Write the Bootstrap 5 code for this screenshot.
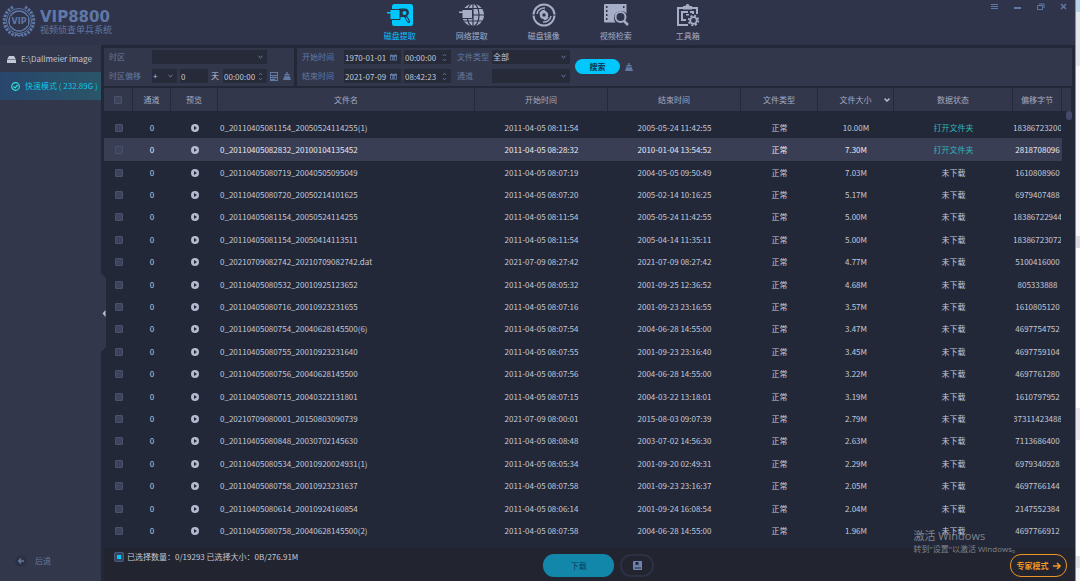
<!DOCTYPE html>
<html lang="zh-CN">
<head>
<meta charset="utf-8">
<meta name="viewport" content="width=device-width, initial-scale=1">
<title>VIP8800 视频侦查单兵系统</title>
<link rel="stylesheet" href="https://cdn.jsdelivr.net/npm/bootstrap@5.3.0/dist/css/bootstrap.min.css">
<style>
  :root { --panel:#32374b; --deep:#232838; --field:#262a39; --muted:#6279a3; --text:#c3c8d8; --accent:#00c8ff; }
  html, body { height:100%; }
  body { font:8px/12px "Noto Sans CJK SC",sans-serif; color:var(--text); background:var(--deep); overflow:hidden; }
  svg { display:block; fill:currentColor; flex:none; }
  button, a { color:inherit; text-decoration:none; }
  .plain { background:none; border:0; padding:0; }
  .muted { color:var(--muted); }

  .topbar { display:grid; grid-template-columns:34fr auto 33fr; height:45px; background:#2f344a; padding-left:2px; }
  .brand { color:#5f78a8; padding-top:4px; gap:4px; }
  .brand-name { font:bold 15px/14px "DejaVu Sans",sans-serif; margin:0; }
  .brand-sub { font-size:9px; line-height:11px; }
  .tool { width:72px; padding-top:3px; color:#a5aec6; text-align:center; }
  .tool svg { margin:0 auto 1px; }
  .tool span { font-size:8px; line-height:13px; display:block; }
  .tool.current { color:var(--accent); }
  .winctl { color:#5f78a8; gap:14px; padding:2px 7px 0 0; }

  .side { width:101px; background:var(--panel); padding-top:1px; }
  .side-link { height:26px; padding-left:7px; gap:5px; }
  .side-link.current { height:28px; padding-left:11px; background:linear-gradient(90deg,#28466c,#2a5568); color:#0fc3e8; }
  .back { padding:0 0 14px 15px; gap:8px; color:var(--muted); }
  .back i { width:12px; height:12px; border-radius:50%; background:#2c3145; display:grid; place-items:center; }
  .fold { position:absolute; left:0; top:228px; width:5px; height:79px; z-index:2; color:#32374b; }

  .main { background:var(--deep); padding:3px 3px 0 3px; }
  .pane { background:var(--panel); padding:2px 0 3px 5px; height:38px; }
  .grid2 { display:grid; grid-auto-rows:14px; gap:5px 3px; align-items:center; }
  .zone { width:190px; grid-template-columns:40px 115px auto; }
  .when { grid-template-columns:39px 57px 47px; }
  .kind { grid-template-columns:32px 78px; }
  .fld { background-color:var(--field); color:var(--text); border:0; border-radius:0; height:14px; padding:0 1px; font:inherit; min-width:0; width:100%; outline:0; appearance:none; }
  select.fld { background-image:url("data:image/svg+xml,%3Csvg xmlns='http://www.w3.org/2000/svg' viewBox='0 0 6 4'%3E%3Cpath d='M.6.8 3 3 5.400.8' fill='none' stroke='%236f88b5' stroke-width='1.2'/%3E%3C/svg%3E"); background-repeat:no-repeat; background-position:right 4px center; background-size:5px 4px; }
  .box { background:var(--field); height:14px; padding-right:4px; color:var(--muted); }
  .go { background:var(--accent); color:#0c3350; border:0; border-radius:8px; width:45px; height:15px; font-weight:bold; padding:0; line-height:15px; }

  .list-zone { margin-top:2px; margin-bottom:6px; min-height:0; }
  .files { width:100%; height:100%; table-layout:fixed; border-collapse:separate; border-spacing:0; }
  .files th { height:23px; background:var(--panel); border-right:1px solid #252a3a; color:#a3abc2; font-weight:normal; text-align:center; padding:0; position:relative; }
  .files .gap td { height:5px; }
  .files td { padding:1px 0 0; text-align:center; white-space:nowrap; line-height:12px; }
  .files td:nth-child(4) { text-align:left; padding-left:2px; }
  .files tr.on td:not(:last-child) { background:#3a3e55; color:#e6e8f0; }
  .files td a, .files tr.on td a { color:#2fb5b5; }
  .files .bytes { display:flex; justify-content:center; overflow:hidden; margin:0 1px; }
  .files svg { margin:auto; color:#b3bacd; }
  .sort { position:absolute; right:3px; top:10px; }
  .tick { appearance:none; width:8px; height:8px; display:block; margin:auto; background:#3c435a; border:1px solid #4a526b; border-radius:1px; }
  .tick:indeterminate { background:var(--accent); border:2px solid #34455f; box-shadow:0 0 0 1px #4a5a7c; }
  .thumb { position:absolute; right:0; top:23px; width:6px; height:9px; border-radius:3px; background:#454a6b; }

  .foot { display:grid; grid-template-columns:28fr auto 27fr; height:33px; background:#22252f; margin-right:-3px; padding:0 8px 0 11px; }
  .foot label { gap:4px; height:18px; }
  .foot .tick { margin:0; }
  .dl { width:71px; height:23px; border:0; border-radius:11px; background:#1287aa; color:#0c3e54; }
  .save { width:34px; height:23px; border:2px solid #2c3042; border-radius:11px; background:none; color:#6f83b3; display:grid; place-items:center; padding:0; }
  .expert { width:57px; height:23px; border:1px solid #ee9426; border-radius:11px; background:none; color:#ee9426; font-weight:bold; gap:4px; padding:0; }
  .notice { position:absolute; right:55px; bottom:26px; color:#92959d; font-family:"Open Sans","Noto Sans CJK SC",sans-serif; pointer-events:none; opacity:.85; }
  .notice strong { display:block; font-size:11px; line-height:15px; font-weight:normal; }
  .edge { width:5px; border-left:1px solid #8b8e98; background:linear-gradient(#b9d4ea 0 12px,#e4e6ea 12px 66px,#f8f8f8 66px 236px,#dedee0 236px 248px,#fff 248px 408px,#e8e8ea 408px 440px,#fff 440px 556px,#e2e2e4 556px 568px,#f4f4f4 568px); }
</style>
</head>
<body class="d-flex">
<svg class="d-none">
  <symbol id="play" viewBox="0 0 8 8"><path fill-rule="evenodd" d="M4 0a4 4 0 1 1 0 8 4 4 0 0 1 0-8zM3 2v4l3-2z"/></symbol>
  <symbol id="cal" viewBox="0 0 8 8"><path fill-rule="evenodd" d="M0 1h1.500V0h1v1h3V0h1v1H8v6.500H0zM1 3v3.500h1.300V3zm2.100 0v3.500h.5V3zm1.300 0v3.500h.5V3zM5.700 3v3.500H7V3z"/></symbol>
  <symbol id="spin" viewBox="0 0 6 10"><path d="M1 3.200 3 1l2 2.200M1 6.800 3 9l2-2.200" fill="none" stroke="currentColor"/></symbol>
  <symbol id="brush" viewBox="0 0 8 8"><path d="M3.300 0h1.400v2H6.500v1.500h-5V2h1.800zM1.200 4.200h5.600L8 8H0z"/></symbol>
</svg>

<div class="flex-grow-1 d-flex flex-column position-relative" style="min-width:0">
  <header class="topbar">
    <div class="brand d-flex">
      <svg width="34" height="34" viewBox="0 0 34 34" fill="none">
        <g fill="none" stroke="currentColor"><circle cx="17" cy="17" r="12.500" stroke-width="1"/><circle cx="17" cy="17" r="10" stroke-width="1.500"/>
        <path stroke-width="3" stroke-dasharray="2.400 1.200" d="M11 3.200A15 15 0 0 0 14 31.500M23 3.200A15 15 0 0 1 20 31.500"/><path d="M13 30l4 2 4-2" stroke-width="1.500"/></g>
        <rect x="8" y="12.500" width="18" height="9" fill="#2f344a"/>
        <text x="17" y="20" text-anchor="middle" font-family="DejaVu Sans" font-weight="bold" font-size="8" fill="currentColor">VIP</text>
      </svg>
      <div style="padding-top:6px"><h1 class="brand-name">VIP8800</h1><div class="brand-sub">视频侦查单兵系统</div></div>
    </div>
    <nav class="d-flex">
      <a class="tool current" href="#"><svg width="26" height="25" viewBox="0 0 26 25"><rect x="5" y="1" width="21" height="22" rx="2.500"/><path d="M12 5.500h6a4 4 0 0 1 2 7.400l3 4.600a1.600 1.600 0 0 1-2.800 1.600l-3.200-5h-5" fill="#20374f"/><path d="M3 6.500h10v10H3z" stroke="#2f344a"/><path d="M0 9h5v1.500H0z"/><circle cx="17.500" cy="10" r="2"/><path d="m19 14.500 2.500 3.800" stroke="currentColor" stroke-width="1.200"/></svg><span>磁盘提取</span></a>
      <a class="tool" href="#"><svg width="26" height="25" viewBox="0 0 26 25"><circle cx="14" cy="12" r="11"/><g fill="none" stroke="#2f344a" stroke-width="1.200"><path d="M14 1v22M4 5.500h20M3 12h23M4 18h20"/><ellipse cx="14" cy="12" rx="6" ry="11.500"/></g><path d="M3 6.500h10.500v9H3z" stroke="#2f344a"/><path d="M0 8.500h5V10H0z"/></svg><span>网络提取</span></a>
      <a class="tool" href="#"><svg width="26" height="25" viewBox="0 0 26 25"><g fill="none" stroke="currentColor"><circle cx="13" cy="12" r="10.500" stroke-width="2"/><circle cx="13" cy="12" r="3" stroke-width="2.500"/><path stroke-width="1.500" d="M6 11a7 7 0 0 1 8-6M9 11a4.500 4.500 0 0 1 5-3.500M20 13a7 7 0 0 1-8 6M17 14a4.500 4.500 0 0 1-4 2.500"/></g><path d="M1 11.500h4v1H1zM21 11.500h4v1h-4z" fill="#2f344a"/><circle cx="13" cy="12" r="1" fill="#2f344a"/></svg><span>磁盘镜像</span></a>
      <a class="tool" href="#"><svg width="26" height="25" viewBox="0 0 26 25"><path d="M2 1h21.500v9.500a7 7 0 0 0-11 9H2A1 1 0 0 1 1 18.500V2a1 1 0 0 1 1-1z"/><path d="M3 3h1.500v2H3zm0 4h1.500v2H3zm0 4h1.500v2H3zm0 4h1.500v2H3zM20 3h1.500v2H20z" fill="#2f344a"/><circle cx="17.500" cy="14" r="5" fill="#2f344a" stroke="currentColor" stroke-width="2"/><path d="m21 18 4 4" stroke="currentColor" stroke-width="2.500"/></svg><span>视频检索</span></a>
      <a class="tool" href="#"><svg width="26" height="25" viewBox="0 0 26 25"><g fill="none" stroke="currentColor" stroke-width="2"><path d="M13 22H3V5h19v6"/><path d="M11 17H7V9h6m2 0h3v2"/></g><path d="M8 3h2.500a2 2 0 0 1 4 0H17v3.500H8zM11 11h3v1.500h-3z"/><circle cx="18.500" cy="17.500" r="6.500" fill="#2f344a"/><circle cx="18.500" cy="17.500" r="3.300" fill="none" stroke="currentColor" stroke-width="1.800"/><circle cx="18.500" cy="17.500" r="4.800" fill="none" stroke="currentColor" stroke-width="1.800" stroke-dasharray="2 1.770"/></svg><span>工具箱</span></a>
    </nav>
    <div class="winctl d-flex justify-content-end align-items-start">
      <button class="plain" aria-label="菜单"><svg width="9" height="9" viewBox="0 0 9 9"><path d="M1 2h7v1H1zm0 2h7v1H1zm0 2h7v1H1z"/></svg></button>
      <button class="plain" aria-label="最小化"><svg width="9" height="9" viewBox="0 0 9 9"><path d="M1 5h7v2H1z"/></svg></button>
      <button class="plain" aria-label="还原"><svg width="9" height="9" viewBox="0 0 9 9"><path d="M1.500 3.500h5v4h-5zM3 2h5v4" fill="none" stroke="currentColor"/></svg></button>
      <button class="plain" aria-label="关闭"><svg width="9" height="9" viewBox="0 0 9 9"><path d="m2 2 5 5m0-5L2 7" stroke="currentColor" stroke-width="1.500"/></svg></button>
    </div>
  </header>

  <div class="d-flex flex-grow-1" style="min-height:0">
    <aside class="side d-flex flex-column flex-shrink-0">
      <a class="side-link d-flex align-items-center" href="#"><svg width="9" height="7" viewBox="0 0 9 7"><path d="M2 0h5l2 3.500H0zM0 4h9v3H0z"/></svg>E:\Dallmeier image</a>
      <a class="side-link current d-flex align-items-center" href="#"><svg width="9" height="9" viewBox="0 0 9 9" fill="none"><g fill="none" stroke="#35e0d8" stroke-width="1.200"><circle cx="4.500" cy="4.500" r="3.800"/><path d="m2.500 4.500 1.500 1.500 2.700-3"/></g></svg><span class="text-nowrap">快速模式 ( 232.89G )</span></a>
      <a class="back d-flex align-items-center mt-auto" href="#"><i><svg width="6" height="6" viewBox="0 0 6 6"><path d="M3 .5.700 3 3 5.500M.7 3H6" fill="none" stroke="currentColor" stroke-width="1.300"/></svg></i>后退</a>
    </aside>

    <main class="main flex-grow-1 d-flex flex-column position-relative" style="min-width:0">
      <button class="plain fold" aria-label="收起"><svg width="5" height="79" viewBox="0 0 5 79"><path d="M0 0l5 5v69l-5 5z"/><path d="M4.500 37v7L1.500 40.500z" fill="#b9c1d6"/></svg></button>
      <div class="d-flex" style="gap:3px">
        <form class="pane grid2 zone flex-shrink-0">
          <label class="muted" for="tz">时区</label><select class="fld" id="tz"><option></option></select><span></span>
          <label class="muted" for="sign">时区偏移</label>
          <div class="d-flex" style="gap:3px"><select class="fld flex-shrink-0" id="sign" style="width:25px"><option>+</option></select><input class="fld" id="days" value="0" aria-label="天数"><label for="days" style="padding:1px 1px 0 0">天</label><div class="box d-flex align-items-center flex-shrink-0" style="width:44px"><input class="fld" value="00:00:00" aria-label="偏移时间"><svg width="5" height="9"><use href="#spin"/></svg></div></div>
          <div class="d-flex muted" style="gap:5px"><button type="button" class="plain" aria-label="计算"><svg width="8" height="9" viewBox="0 0 8 9"><path fill-rule="evenodd" d="M0 0h8v9H0zM1 1v2h6V1zm0 3v1h1.500V4zm2.200 0v1h1.500V4zm2.200 0v1H7V4zM1 6v1h1.500V6zm2.200 0v1h1.500V6zM5.400 6v2H7V6z"/></svg></button><button type="button" class="plain" aria-label="清除偏移"><svg width="8" height="8"><use href="#brush"/></svg></button></div>
        </form>
        <form class="pane d-flex flex-grow-1">
          <div class="grid2 when">
            <label class="muted" for="d1">开始时间</label><div class="box d-flex align-items-center"><input class="fld" id="d1" value="1970-01-01"><svg width="7" height="7"><use href="#cal"/></svg></div><div class="box d-flex align-items-center"><input class="fld" value="00:00:00" aria-label="开始时刻"><svg width="5" height="9"><use href="#spin"/></svg></div>
            <label class="muted" for="d2">结束时间</label><div class="box d-flex align-items-center"><input class="fld" id="d2" value="2021-07-09"><svg width="7" height="7"><use href="#cal"/></svg></div><div class="box d-flex align-items-center"><input class="fld" value="08:42:23" aria-label="结束时刻"><svg width="5" height="9"><use href="#spin"/></svg></div>
          </div>
          <div class="grid2 kind" style="margin-left:6px">
            <label class="muted text-nowrap" for="ft">文件类型</label><select class="fld" id="ft"><option>全部</option></select>
            <label class="muted" for="ch">通道</label><select class="fld" id="ch"><option></option></select>
          </div>
          <div class="d-flex align-items-center muted" style="gap:5px;margin-left:5px"><button type="button" class="go">搜索</button><button type="button" class="plain" aria-label="清除条件"><svg width="8" height="8"><use href="#brush"/></svg></button></div>
        </form>
      </div>

      <div class="list-zone flex-grow-1 position-relative">
        <table class="files">
          <colgroup><col style="width:29px"><col style="width:38px"><col style="width:47px"><col><col style="width:133px"><col style="width:133px"><col style="width:77px"><col style="width:76px"><col style="width:119px"><col style="width:49px"><col style="width:10px"></colgroup>
          <thead><tr><th><input type="checkbox" class="tick" aria-label="全选"></th><th>通道</th><th>预览</th><th>文件名</th><th>开始时间</th><th>结束时间</th><th>文件类型</th><th>文件大小<svg class="sort" width="6" height="4" viewBox="0 0 6 4"><path d="M.6.600 3 3 5.400.600" fill="none" stroke="currentColor" stroke-width="1.500"/></svg></th><th>数据状态</th><th>偏移字节</th><th></th></tr></thead>
          <tbody id="rows"><tr class="gap"><td colspan="11"></td></tr></tbody>
        </table>
        <div class="thumb"></div>
      </div>

      <footer class="foot">
        <label class="d-flex align-items-center"><input type="checkbox" class="tick" id="some">已选择数量：0/19293 已选择大小：0B/276.91M</label>
        <div class="d-flex align-items-start" style="gap:6px;padding-top:6px"><button class="dl">下载</button><button class="save" aria-label="保存"><svg width="9" height="9" viewBox="0 0 9 9"><path fill-rule="evenodd" d="M0 1a1 1 0 0 1 1-1h8v9H1a1 1 0 0 1-1-1zM2.500 1v3.500L4 3.500l1.500 1V1zM1.500 6.500v1H8v-1z"/></svg></button></div>
        <div class="d-flex justify-content-end align-items-start" style="padding-top:6px"><button class="expert d-flex align-items-center justify-content-center">专家模式<svg width="8" height="8" viewBox="0 0 8 8"><path d="M0 4h7M4 1l3 3-3 3" fill="none" stroke="currentColor" stroke-width="1.600"/></svg></button></div>
      </footer>
    </main>
  </div>
  <div class="notice"><strong>激活 Windows</strong>转到"设置"以激活 Windows。</div>
</div>
<div class="edge flex-shrink-0"></div>

<script src="https://cdn.jsdelivr.net/npm/bootstrap@5.3.0/dist/js/bootstrap.bundle.min.js"></script>
<script>
  const files = `0_20110405081154_20050524114255(1)|2011-04-05 08:11:54|2005-05-24 11:42:55|10.00M|18386723200
0_20110405082832_20100104135452|2011-04-05 08:28:32|2010-01-04 13:54:52|7.30M|2818708096
0_20110405080719_20040505095049|2011-04-05 08:07:19|2004-05-05 09:50:49|7.03M|1610808960
0_20110405080720_20050214101625|2011-04-05 08:07:20|2005-02-14 10:16:25|5.17M|6979407488
0_20110405081154_20050524114255|2011-04-05 08:11:54|2005-05-24 11:42:55|5.00M|18386722944
0_20110405081154_20050414113511|2011-04-05 08:11:54|2005-04-14 11:35:11|5.00M|18386723072
0_20210709082742_20210709082742.dat|2021-07-09 08:27:42|2021-07-09 08:27:42|4.77M|5100416000
0_20110405080532_20010925123652|2011-04-05 08:05:32|2001-09-25 12:36:52|4.68M|805333888
0_20110405080716_20010923231655|2011-04-05 08:07:16|2001-09-23 23:16:55|3.57M|1610805120
0_20110405080754_20040628145500(6)|2011-04-05 08:07:54|2004-06-28 14:55:00|3.47M|4697754752
0_20110405080755_20010923231640|2011-04-05 08:07:55|2001-09-23 23:16:40|3.45M|4697759104
0_20110405080756_20040628145500|2011-04-05 08:07:56|2004-06-28 14:55:00|3.22M|4697761280
0_20110405080715_20040322131801|2011-04-05 08:07:15|2004-03-22 13:18:01|3.19M|1610797952
0_20210709080001_20150803090739|2021-07-09 08:00:01|2015-08-03 09:07:39|2.79M|37311423488
0_20110405080848_20030702145630|2011-04-05 08:08:48|2003-07-02 14:56:30|2.63M|7113686400
0_20110405080534_20010920024931(1)|2011-04-05 08:05:34|2001-09-20 02:49:31|2.29M|6979340928
0_20110405080758_20010923231637|2011-04-05 08:07:58|2001-09-23 23:16:37|2.05M|4697766144
0_20110405080614_20010924160854|2011-04-05 08:06:14|2001-09-24 16:08:54|2.04M|2147552384
0_20110405080758_20040628145500(2)|2011-04-05 08:07:58|2004-06-28 14:55:00|1.96M|4697766912`;
  document.getElementById('rows').insertAdjacentHTML('beforeend', files.split('\n').map((line, i) => {
    const [name, from, to, size, bytes] = line.split('|');
    return `<tr class="${i === 1 ? 'on' : ''}"><td><input type="checkbox" class="tick" aria-label="选择 ${name}"></td><td>0</td>
      <td><svg width="8" height="8"><use href="#play"/></svg></td><td>${name}</td><td>${from}</td><td>${to}</td><td>正常</td><td>${size}</td>
      <td>${i < 2 ? '<a href="#">打开文件夹</a>' : '未下载'}</td><td><div class="bytes">${bytes}</div></td><td></td></tr>`;
  }).join(''));
  document.getElementById('some').indeterminate = true;
</script>
</body>
</html>
